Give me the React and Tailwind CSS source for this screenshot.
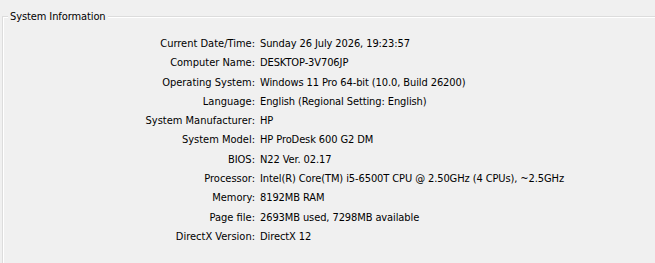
const rows = [
  ["Current Date/Time:", "Sunday 26 July 2026, 19:23:57"],
  ["Computer Name:", "DESKTOP-3V706JP"],
  ["Operating System:", "Windows 11 Pro 64-bit (10.0, Build 26200)"],
  ["Language:", "English (Regional Setting: English)"],
  ["System Manufacturer:", "HP"],
  ["System Model:", "HP ProDesk 600 G2 DM"],
  ["BIOS:", "N22 Ver. 02.17"],
  ["Processor:", "Intel(R) Core(TM) i5-6500T CPU @ 2.50GHz (4 CPUs), ~2.5GHz"],
  ["Memory:", "8192MB RAM"],
  ["Page file:", "2693MB used, 7298MB available"],
  ["DirectX Version:", "DirectX 12"],
];

export default function App() {
  return (
    <div
      className="w-[655px] h-[263px] bg-[#f0f0f0] overflow-hidden pt-[16px] pl-[2px] text-[11px] text-black"
      style={{ fontFamily: '"DejaVu Sans Condensed", "DejaVu Sans", sans-serif' }}
    >
      <div className="relative w-[700px] h-[300px] border-l border-t border-[#dcdcdc] shadow-[inset_1px_1px_0_#ffffff] pt-[17px]">
        <span className="absolute top-[-9px] left-[5px] px-[2px] bg-[#f0f0f0] leading-[18px] tracking-[-0.1px]">
          System Information
        </span>
        <div className="grid grid-cols-[252px_1fr] gap-x-[5px]">
          {rows.map(([k, v]) => (
            <div key={k} className="contents">
              <div className="text-right h-[19.3px] leading-[19.3px] whitespace-nowrap">{k}</div>
              <div className="h-[19.3px] leading-[19.3px] whitespace-nowrap tracking-[-0.1px]">{v}</div>
            </div>
          ))}
        </div>
      </div>
    </div>
  );
}
